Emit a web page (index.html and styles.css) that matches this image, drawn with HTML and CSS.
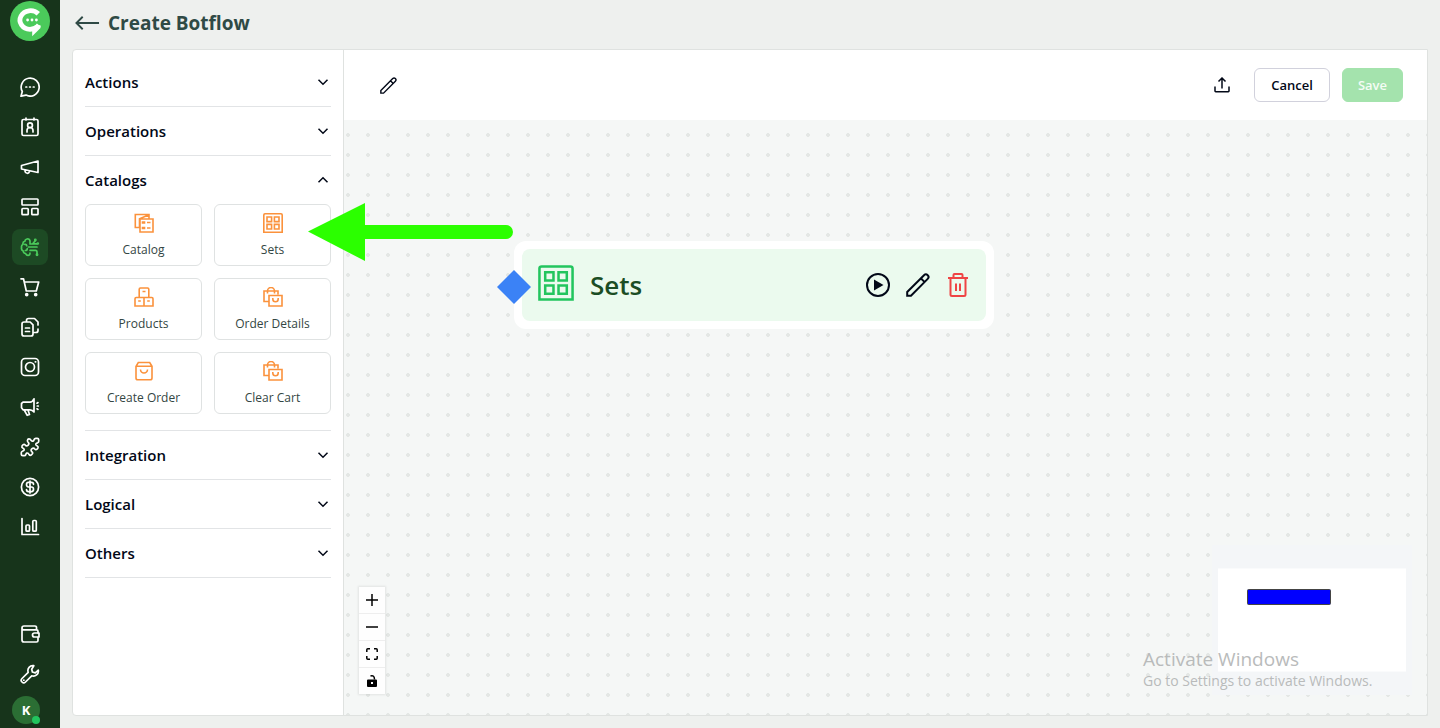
FILE: index.html
```html
<!DOCTYPE html>
<html lang="en">
<head>
<meta charset="utf-8">
<meta name="viewport" content="width=device-width, initial-scale=1">
<title>Create Botflow</title>
<link rel="stylesheet" href="styles.css">
</head>
<body>
<svg class="defs" aria-hidden="true">
  <symbol id="pencil" viewBox="0 0 24 24"><path d="M1.200 22.800V19L18 2.200a2.600 2.600 0 0 1 3.700 3.700L5 22.800zM14.800 5.200l3.900 3.900"/></symbol>
  <symbol id="chevron" viewBox="0 0 12 12"><path d="M1.500 3.800 6 8.300l4.500-4.500"/></symbol>
  <symbol id="sets" viewBox="0 0 20 20"><path d="M.8 19.200V2Q.8.800 2 .8h16q1.200 0 1.200 1.200v17.200zM4 4h4.600v4.600H4zM11.400 4H16v4.600h-4.600zM4 11.400h4.600V16H4zM11.400 11.400H16V16h-4.600z"/></symbol>
  <symbol id="bags" viewBox="0 0 20 20"><path d="M5.500 14.500H1V4h14v3.500M4.500 6.500V4a3.500 3.500 0 0 1 7 0v2.500M6 8.500h13V19H6zM9.800 11v1a2.700 2.700 0 0 0 5.400 0v-1"/></symbol>
</svg>
<div class="app">
  <nav class="rail" aria-label="Main">
    <a class="logo" href="#" aria-label="Home">
      <svg viewBox="0 0 40 40"><circle cx="20" cy="20" r="20" fill="#4bca5b"/><path d="M28.300 12.800A10.500 9.300 0 1 0 20 28.300Q25.500 28 28.800 24" fill="none" stroke="#fff" stroke-width="4.800"/><path d="M25 24.300h5.500V27l-8.300 8.200V29z" fill="#fff"/><g fill="#fff"><circle cx="17.600" cy="19" r="1.400"/><circle cx="22" cy="19" r="1.400"/><circle cx="26.400" cy="19" r="1.400"/></g></svg>
    </a>
    <div class="rail-group">
      <a class="rail-item" href="#" aria-label="Chats"><svg viewBox="0 0 20 20"><path d="M1 19.200l1.300-4.700A9 9 0 1 1 6 18.100z"/><path d="M5.900 10h.8M9.600 10h.8M13.300 10h.8"/></svg></a>
      <a class="rail-item" href="#" aria-label="Contacts"><svg viewBox="0 0 20 20"><path d="M3.500 2.500h13q1.500 0 1.500 1.500v13q0 1.500-1.500 1.500h-13Q2 18.500 2 17V4q0-1.500 1.500-1.500zM6 1v2M14 1v2M7 15v-1.500a3 3 0 0 1 6 0V15"/><circle cx="10" cy="8.200" r="2.400"/></svg></a>
      <a class="rail-item" href="#" aria-label="Broadcasts"><svg viewBox="0 0 20 20"><path d="M1.500 8.500 18 4v11.500L1.500 12zM5 13v1.200a2.300 2.300 0 0 0 4.500.4V14"/></svg></a>
      <a class="rail-item" href="#" aria-label="Templates"><svg viewBox="0 0 20 20"><rect x="2" y="2" width="16" height="6" rx=".8"/><rect x="2" y="11.500" width="6.200" height="6.200" rx=".8"/><rect x="11.800" y="11.500" width="6.200" height="6.200" rx=".8"/></svg></a>
      <a class="rail-item active" href="#" aria-label="Botflows" aria-current="page"><svg viewBox="0 0 20 20"><path d="M10 4Q9.500 1.500 7 2 5 2.500 4.800 4.300 2.500 5 3 7.300 1 8.500 1.600 10.800 1 13 3.200 14q.2 2.200 2.400 2.500Q6.500 18.800 9 18.200q1-.3 1-2M4.800 7.300q1.800-.2 2 1.500M5.300 13.500q2 0 2-2M8.500 10H17M10.500 7h2L15 4M13.500 6.800H17M10 13.300h5.500q1.500 0 1.500 2v2M10 4v3"/><circle cx="15.300" cy="3" r=".6"/><circle cx="17.800" cy="6.500" r=".5"/><circle cx="17" cy="17.800" r=".6"/></svg></a>
      <a class="rail-item" href="#" aria-label="Orders"><svg viewBox="0 0 20 20"><path d="M1 1.800h2.500L6.300 14h10L18.700 5H4.300"/><circle cx="6.700" cy="17.600" r="1" fill="currentColor"/><circle cx="15.700" cy="17.600" r="1" fill="currentColor"/></svg></a>
      <a class="rail-item" href="#" aria-label="Forms"><svg viewBox="0 0 20 20"><path d="M6.500 5V3.500Q6.500 1.500 8.500 1.500h6L18 5v3M18 12v1.500q0 2-2 2h-1.500M4 5h6.200L13 7.800V17q0 2-2 2H4q-2 0-2-2V7q0-2 2-2zM5.500 11h4M5.500 14.500h4"/></svg></a>
      <a class="rail-item" href="#" aria-label="Instagram"><svg viewBox="0 0 20 20"><rect x="1.500" y="1.500" width="17" height="17" rx="3.500"/><circle cx="10" cy="10" r="4.500"/><path d="M15.300 4.800h.4"/></svg></a>
      <a class="rail-item" href="#" aria-label="Campaigns"><svg viewBox="0 0 20 20"><path d="M14 1.800V15Q12.500 12.800 10 12.800H3l-1.500-2V6.500L3 5.200h7Q12.500 5 14 1.800zM4.200 13l3 5.300 2.300-.8L8 13M17 6.200l1-.6M17.300 9h1M17 11.800l1 .6"/></svg></a>
      <a class="rail-item" href="#" aria-label="Integrations"><svg viewBox="0 0 20 20"><path d="M9 1.800Q10.300 1.800 11 3.200 12.200 4.800 13.500 3.800 14 3.300 14.200 2.400 14.600 1.300 15.800 1.300H17.200Q18.700 1.300 18.700 2.800V4.200Q18.700 5.400 17.600 5.800 15.500 6.300 15.900 7.800 16.200 8.600 17.300 9 18.600 9.800 17.900 11.200L17 12.200Q15.800 13.200 14.800 12 13.500 10.300 11.800 11.800 10.300 13.500 12 14.800 13.200 15.800 12.200 17L11.300 18Q10 18.800 9 17.500 8.200 15.600 6.800 16.100 6.100 16.500 5.800 17.600 5.400 18.700 4.200 18.700H2.800Q1.300 18.700 1.300 17.200V15.800Q1.300 14.600 2.400 14.200 4.500 13.700 4.100 12.200 3.800 11.400 2.700 11 1.400 10.200 2.100 8.800L3 7.800Q4.200 6.800 5.200 8 6.500 9.700 8.200 8.200 9.700 6.500 8 5.200 6.800 4.200 7.800 2.500 8.200 1.800 9 1.800z"/></svg></a>
      <a class="rail-item" href="#" aria-label="Billing"><svg viewBox="0 0 20 20"><circle cx="10" cy="10" r="8.600"/><path d="M13.500 7.300q0-2-2-2h-3q-2 0-2 2.300T8.500 10h3q2 0 2 2.300T11.500 14.600h-3q-2 0-2-2M10 4v12"/></svg></a>
      <a class="rail-item" href="#" aria-label="Analytics"><svg viewBox="0 0 20 20"><path d="M2 1.500V17.500h16.500"/><rect x="6" y="8" width="3.500" height="6.200" rx="1"/><rect x="12.800" y="3.500" width="3.500" height="10.700" rx="1"/></svg></a>
    </div>
    <div class="rail-group rail-bottom">
      <a class="rail-item" href="#" aria-label="Wallet"><svg viewBox="0 0 20 20"><path d="M16.500 5V3.300Q16.500 2 15 2H4Q2 2 2 4t2 1.800h12.500q1.500 0 1.500 1.500V9M2 4v12q0 2 2 2h12.500q1.500 0 1.500-1.500V13.500"/><path d="M19 9v4h-4.500a2 2 0 0 1 0-4z"/></svg></a>
      <a class="rail-item" href="#" aria-label="Settings"><svg viewBox="0 0 20 20"><path d="M13.800 1.700a5 5 0 0 0-5.600 6.600L2 14.500a2.400 2.400 0 0 0 3.500 3.500l6.200-6.200a5 5 0 0 0 6.600-5.600l-3 2.700-2.900-.9-.7-2.800zM3.800 16.200h.1"/></svg></a>
      <button class="account" type="button" aria-label="Account"><span class="avatar">K</span></button>
    </div>
  </nav>

  <div class="page">
    <header class="title-bar">
      <a class="back" href="#" aria-label="Back"><svg viewBox="0 0 26 16"><path d="M25 8H2M8 1.500 1.500 8 8 14.500"/></svg></a>
      <h1>Create Botflow</h1>
    </header>
    <main class="workspace">
      <aside class="palette">
        <section><button class="section-head" type="button" aria-expanded="false">Actions<svg><use href="#chevron"/></svg></button></section>
        <section><button class="section-head" type="button" aria-expanded="false">Operations<svg><use href="#chevron"/></svg></button></section>
        <section>
          <button class="section-head" type="button" aria-expanded="true">Catalogs<svg><use href="#chevron"/></svg></button>
          <div class="cards">
            <button class="card" type="button"><svg viewBox="0 0 20 20"><path d="M5.500 14.500H1.300V1.500H15v4M5.500 14.500V5.800L14.500 2M6 6h13v13H6zM8.500 10h2v-1h-2zM13 9.500h3.500M8.500 15.500h2v-1h-2zM13 15h3.500"/></svg>Catalog</button>
            <button class="card" type="button"><svg><use href="#sets"/></svg>Sets</button>
            <button class="card" type="button"><svg viewBox="0 0 20 20"><path d="M5.200 10V2.200Q5.200 1 6.400 1h7.200q1.200 0 1.200 1.200V10M1 19v-7.300q0-1.200 1.200-1.200H10V19zM10 19v-8.500h7.800q1.200 0 1.200 1.200V19zM8.500 4.500h3M4.200 14h2.600M13.200 14h2.600"/></svg>Products</button>
            <button class="card" type="button"><svg><use href="#bags"/></svg>Order Details</button>
            <button class="card" type="button"><svg viewBox="0 0 20 20"><path d="M2 5.300 4.300 1.500h11.400L18 5.300V17q0 1.800-1.800 1.800H3.800Q2 18.800 2 17zM2 5.300h16M6.500 8.500a3.500 3.500 0 0 0 7 0"/></svg>Create Order</button>
            <button class="card" type="button"><svg><use href="#bags"/></svg>Clear Cart</button>
          </div>
        </section>
        <section><button class="section-head" type="button" aria-expanded="false">Integration<svg><use href="#chevron"/></svg></button></section>
        <section><button class="section-head" type="button" aria-expanded="false">Logical<svg><use href="#chevron"/></svg></button></section>
        <section><button class="section-head" type="button" aria-expanded="false">Others<svg><use href="#chevron"/></svg></button></section>
      </aside>
      <div class="editor">
        <div class="toolbar">
          <button class="icon-button rename" type="button" aria-label="Rename"><svg><use href="#pencil"/></svg></button>
          <button class="icon-button export" type="button" aria-label="Export"><svg viewBox="0 0 16 16"><path d="M1 9.500V14q0 .7.700.7h12.600q.7 0 .7-.7V9.500M8 11.500V1.300M4.500 4.500 8 1l3.500 3.500"/></svg></button>
          <button class="button" type="button">Cancel</button>
          <button class="button primary" type="button" disabled>Save</button>
        </div>
        <div class="canvas">
          <div class="node">
            <span class="handle"></span>
            <div class="node-body">
              <svg class="node-icon"><use href="#sets"/></svg>
              <span class="node-name">Sets</span>
              <button class="icon-button" type="button" aria-label="Run"><svg viewBox="0 0 24 24"><circle cx="12" cy="12" r="11"/><path d="M8 6.500v11l9.500-5.500z" fill="currentColor" stroke="none"/></svg></button>
              <button class="icon-button" type="button" aria-label="Edit"><svg><use href="#pencil"/></svg></button>
              <button class="icon-button delete" type="button" aria-label="Delete"><svg viewBox="0 0 24 24"><path d="M2 5h20M4.500 5v16.500q0 1.500 1.500 1.500h12q1.500 0 1.500-1.500V5M7.500 4.500V2q0-1 1-1h7q1 0 1 1v2.500M10 10.500V18M14 10.500V18"/></svg></button>
            </div>
          </div>
          <svg class="pointer" viewBox="0 0 206 58" aria-hidden="true"><path d="M0 28.500 57 0v22h141a7 7 0 0 1 0 14H57v22z" fill="#2bff00"/></svg>
          <div class="controls">
            <button type="button" aria-label="Zoom in"><svg viewBox="0 0 12 12"><path d="M6 0v12M0 6h12"/></svg></button>
            <button type="button" aria-label="Zoom out"><svg viewBox="0 0 12 12"><path d="M0 6h12"/></svg></button>
            <button type="button" aria-label="Fit view"><svg viewBox="0 0 12 12"><path d="M.8 4V1.800q0-1 1-1H4M8 .8h2.200q1 0 1 1V4M11.200 8v2.200q0 1-1 1H8M4 11.200H1.800q-1 0-1-1V8"/></svg></button>
            <button type="button" aria-label="Lock"><svg viewBox="0 0 12 12"><path fill="#000" stroke="none" fill-rule="evenodd" d="M2 4.500h8q1 0 1 1v5.500q0 1-1 1H2q-1 0-1-1V5.500q0-1 1-1zM5 7v2h2V7z"/><path d="M4.500 1Q8.500-.2 8.500 4.500"/></svg></button>
          </div>
          <svg class="minimap" viewBox="0 0 200 150" role="img" aria-label="Mini map"><rect width="200" height="150" fill="#f4f6f8"/><rect x="6" y="23.500" width="188" height="103" fill="#fff"/><rect x="35.500" y="44.500" width="83" height="15" rx="1" fill="#00f" stroke="#444"/></svg>
          <div class="watermark"><p class="watermark-title">Activate Windows</p><p>Go to Settings to activate Windows.</p></div>
        </div>
      </div>
    </main>
  </div>
</div>
</body>
</html>
```
FILE: styles.css
```css
* { box-sizing: border-box; }
body { margin: 0; font-family: "Open Sans", "Noto Sans", sans-serif; color: #020817; background: #eef0ee; }
button { font: inherit; color: inherit; background: none; border: 0; padding: 0; cursor: pointer; }
a { color: inherit; }
h1, p { margin: 0; }
svg { display: block; fill: none; stroke: currentColor; }
.defs { position: absolute; width: 0; height: 0; }

.app { display: flex; min-height: 100vh; }

.rail { flex: none; width: 60px; display: flex; flex-direction: column; align-items: center; padding: 1px 0 4px; background: #17341b; color: #fff; }
.logo svg { width: 40px; height: 40px; stroke: none; }
.rail-group { display: flex; flex-direction: column; gap: 4px; margin-top: 28px; }
.rail-bottom { margin-top: auto; }
.rail-item { width: 36px; height: 36px; display: grid; place-items: center; border-radius: 8px; }
.rail-item svg { width: 20px; height: 20px; stroke-width: 1.7; stroke-linecap: round; stroke-linejoin: round; }
.rail-item.active { background: #1d4a24; color: #4bca5b; }
.account { position: relative; width: 28px; height: 28px; }
.avatar { display: grid; place-items: center; height: 28px; border-radius: 50%; background: #2b6e34; color: #fff; font-size: 13px; font-weight: 700; }
.account::after { content: ""; position: absolute; right: 0; bottom: 0; width: 8px; height: 8px; border-radius: 50%; background: #22c55e; }

.page { flex: 1; min-width: 0; display: flex; flex-direction: column; padding: 0 12px 12px; }
.title-bar { display: flex; align-items: center; gap: 8px; height: 49px; padding: 0 3px 3px; color: #2f4a45; }
.back svg { width: 25px; height: 16px; stroke-width: 2; }
h1 { font-size: 19px; line-height: 24px; font-weight: 700; }

.workspace { flex: 1; display: flex; background: #fff; border: 1px solid #dfe2e0; border-radius: 4px 0 0 4px; }
.palette { flex: none; width: 271px; padding: 8px 12px; border-right: 1px solid #dfe2e0; }
.palette section { border-bottom: 1px solid #e2e4e6; }
.section-head { display: flex; align-items: center; justify-content: space-between; width: 100%; height: 48px; padding-right: 2px; font-size: 15px; font-weight: 600; }
.section-head svg { width: 12px; height: 12px; stroke-width: 1.5; }
.section-head[aria-expanded="true"] svg { transform: rotate(180deg); }
.cards { display: grid; grid-template-columns: 1fr 1fr; gap: 12px; padding-bottom: 16px; }
.card { display: flex; flex-direction: column; align-items: center; gap: 8px; height: 62px; padding-top: 8px; border: 1px solid #dfe2e2; border-radius: 6px; color: #334643; font-size: 12px; line-height: 18px; }
.card svg { width: 20px; height: 20px; color: #fb923c; stroke-width: 1.6; }

.editor { flex: 1; min-width: 0; display: flex; flex-direction: column; }
.toolbar { display: flex; align-items: center; gap: 12px; height: 70px; padding: 0 24px 0 36px; }
.icon-button svg { width: 24px; height: 24px; stroke-width: 2; }
.icon-button.rename svg { width: 17px; height: 17px; }
.icon-button.export { margin-left: auto; margin-right: 12px; }
.icon-button.export svg { width: 16px; height: 16px; stroke-width: 1.5; }
.button { height: 34px; padding: 0 16px; border: 1px solid #d1d1dc; border-radius: 6px; font-size: 13px; font-weight: 600; }
.button.primary { padding: 0 15px; border-color: #a4e3ad; background: #a4e3ad; color: #f4fcf5; }

.canvas { flex: 1; position: relative; background: #f5f7f6 radial-gradient(circle, #e4e7e5 1.6px, transparent 2.2px) -6px 5px / 20px 20px; }
.node { position: absolute; left: 170px; top: 121px; width: 480px; padding: 8px; border-radius: 12px; background: #fff; }
.node-body { display: flex; align-items: center; gap: 16px; height: 72px; padding: 0 16px; border-radius: 8px; background: #ebfaee; }
.node-icon { width: 36px; height: 36px; margin-bottom: 4px; color: #22c55e; stroke-width: 1.4; }
.node-name { flex: 1; color: #1b4d24; font-size: 26px; font-weight: 600; }
.icon-button.delete { color: #ef4444; }
.handle { position: absolute; left: -12px; top: 34px; width: 24px; height: 24px; background: #3b82f6; transform: rotate(45deg); }
.pointer { position: absolute; left: -36px; top: 83px; width: 206px; height: 58px; stroke: none; z-index: 2; pointer-events: none; }
.controls { position: absolute; left: 15px; bottom: 21px; width: 26px; display: flex; flex-direction: column; gap: 1px; background: #eee; box-shadow: 0 0 2px 1px #00000014; }
.controls button { display: grid; place-items: center; height: 26px; background: #fefefe; }
.controls svg { width: 12px; height: 12px; stroke: #000; stroke-width: 1.5; overflow: visible; }
.minimap { position: absolute; right: 15px; bottom: 20px; width: 200px; height: 150px; stroke: none; }
.watermark { position: absolute; right: 48px; bottom: 24px; width: 236px; color: #b9bbbb; font-size: 14px; line-height: 20px; white-space: nowrap; }
.watermark-title { font-size: 19px; line-height: 24px; }
```
